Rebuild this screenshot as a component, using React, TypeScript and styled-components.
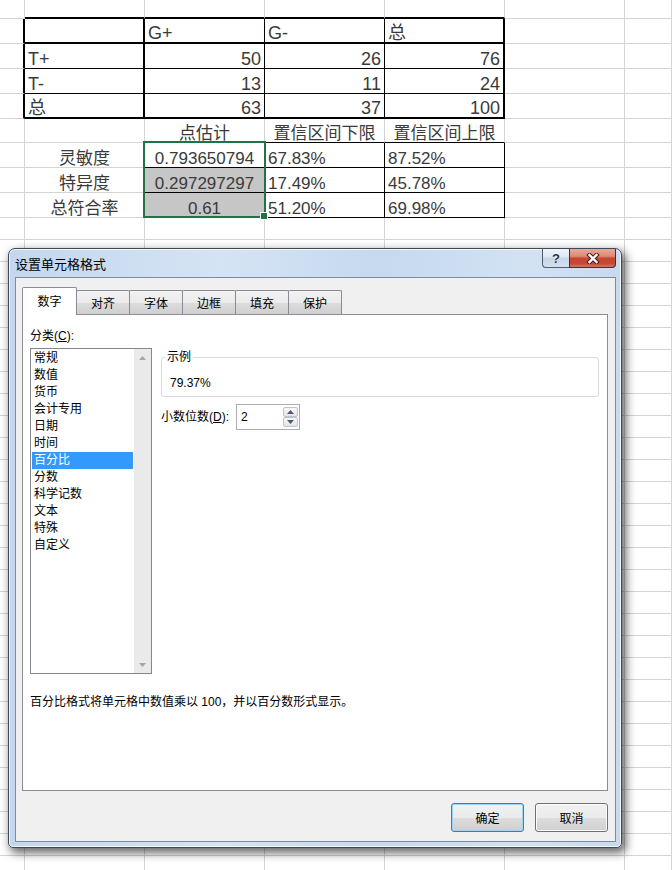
import styled, { createGlobalStyle } from "styled-components";

const GlobalStyle = createGlobalStyle`
  html, body {
    margin: 0;
    padding: 0;
    background: #fff;
  }
  body {
    font-family: "Liberation Sans", "Noto Sans CJK SC", sans-serif;
  }
`;

const Page = styled.div`
  position: relative;
  width: 672px;
  height: 870px;
  overflow: hidden;
  background: #fff;
`;

/* ---------- spreadsheet ---------- */

const Sheet = styled.div`
  display: grid;
  grid-template-columns: 25px repeat(5, 120px) 47px;
  grid-template-rows: 19px repeat(4, 25px) 24px repeat(3, 25px) repeat(30, 22px);
`;

type Line = "g" | "t" | "T";
type Align = "flex-start" | "flex-end" | "center";

const lineCss = (l: Line) =>
  l === "T" ? "2px solid #000" : l === "t" ? "1px solid #000" : "1px solid #d4d4d4";

const Cell = styled.div<{ $r: Line; $b: Line; $align: Align; $fill?: string; $size: number }>`
  position: relative;
  box-sizing: border-box;
  display: flex;
  align-items: flex-end;
  justify-content: ${(p) => p.$align};
  padding: 0 3px;
  border-right: ${(p) => lineCss(p.$r)};
  border-bottom: ${(p) => lineCss(p.$b)};
  background: ${(p) => p.$fill || "transparent"};
  font-size: ${(p) => p.$size}px;
  line-height: 1;
  color: #3a3a3a;
  white-space: nowrap;
`;

const Selection = styled.div`
  position: absolute;
  left: -2px;
  top: -2px;
  width: 123px;
  height: 77px;
  box-sizing: border-box;
  border: 2px solid #217346;
  z-index: 2;
  pointer-events: none;
`;

const FillHandle = styled.div`
  position: absolute;
  right: -4px;
  bottom: -4px;
  width: 6px;
  height: 6px;
  background: #217346;
  border: 1px solid #fff;
`;

const table1 = [
  ["", "G+", "G-", "总"],
  ["T+", "50", "26", "76"],
  ["T-", "13", "11", "24"],
  ["总", "63", "37", "100"],
];

const table2 = [
  ["", "点估计", "置信区间下限", "置信区间上限"],
  ["灵敏度", "0.793650794", "67.83%", "87.52%"],
  ["特异度", "0.297297297", "17.49%", "45.78%"],
  ["总符合率", "0.61", "51.20%", "69.98%"],
];

const ROWS = 39;
const COLS = 7;

const cellSpec = (r: number, c: number) => {
  let right: Line = "g";
  let bottom: Line = "g";
  if (r >= 1 && r <= 4) {
    right = (["T", "T", "t", "t", "T", "g", "g"] as Line[])[c];
  }
  if (r >= 6 && r <= 8 && c >= 1 && c <= 4) right = "t";
  if (c >= 1 && c <= 4) {
    if (r === 0 || r === 1 || r === 4) bottom = "T";
    if (r === 2 || r === 3) bottom = "t";
  }
  if (c >= 2 && c <= 4 && r >= 5 && r <= 8) bottom = "t";

  let text = "";
  let align: Align = "flex-start";
  let size = 18;
  if (r >= 1 && r <= 4 && c >= 1 && c <= 4) {
    text = table1[r - 1][c - 1];
    align = r === 1 || c === 1 ? "flex-start" : "flex-end";
  }
  if (r >= 5 && r <= 8 && c >= 1 && c <= 4) {
    text = table2[r - 5][c - 1];
    size = 17;
    align = r === 5 || c <= 2 ? "center" : "flex-start";
  }
  const fill = (r === 7 || r === 8) && c === 2 ? "#c6c6c6" : undefined;
  return { right, bottom, text, align, size, fill, selected: r === 6 && c === 2 };
};

const SheetGrid = () => {
  const cells = [];
  for (let r = 0; r < ROWS; r++) {
    for (let c = 0; c < COLS; c++) {
      const s = cellSpec(r, c);
      cells.push(
        <Cell key={`${r}-${c}`} $r={s.right} $b={s.bottom} $align={s.align} $fill={s.fill} $size={s.size}>
          {s.text}
          {s.selected && (
            <Selection>
              <FillHandle />
            </Selection>
          )}
        </Cell>
      );
    }
  }
  return <Sheet>{cells}</Sheet>;
};

/* ---------- dialog ---------- */

const Dialog = styled.div`
  position: absolute;
  left: 8px;
  top: 248px;
  width: 614px;
  height: 600px;
  box-sizing: border-box;
  display: flex;
  flex-direction: column;
  border: 1px solid #3f4a57;
  border-radius: 7px 7px 5px 5px;
  background: linear-gradient(90deg, #c3d7ee 0%, #d5e4f4 35%, #c6d9ef 60%, #d2e2f3 85%, #c7daef 100%);
  box-shadow: inset 0 0 0 1px rgba(255, 255, 255, 0.75), 3px 4px 10px 1px rgba(0, 0, 0, 0.6);
  font-family: "Liberation Sans", "Noto Sans CJK SC", sans-serif;
  font-size: 12px;
  color: #000;
  z-index: 5;
`;

const TitleBar = styled.div`
  height: 28px;
  display: flex;
  align-items: flex-start;
  padding-left: 6px;
`;

const Title = styled.div`
  margin-top: 8px;
  font-size: 13px;
  line-height: 16px;
`;

const CaptionButtons = styled.div`
  display: flex;
  margin-left: auto;
  margin-right: 5px;
`;

const HelpButton = styled.div`
  width: 27px;
  height: 19px;
  box-sizing: border-box;
  border: 1px solid #4e5d70;
  border-top: none;
  border-right: none;
  border-radius: 0 0 0 4px;
  background: linear-gradient(180deg, #eef3f9 0%, #dce6f2 45%, #c4d3e5 50%, #d3e0ee 100%);
  display: flex;
  align-items: center;
  justify-content: center;
  font-size: 13px;
  font-weight: bold;
  color: #2a3440;
  text-shadow: 0 0 2px #fff;
`;

const CloseButton = styled.div`
  width: 47px;
  height: 19px;
  box-sizing: border-box;
  border: 1px solid #5a2620;
  border-top: none;
  border-radius: 0 0 4px 0;
  background: linear-gradient(180deg, #e9a99b 0%, #dc8a78 40%, #c7452f 52%, #c24b35 80%, #d27563 100%);
  display: flex;
  align-items: center;
  justify-content: center;
`;

const Body = styled.div`
  flex: 1;
  margin: 0 5px 5px 6px;
  box-sizing: border-box;
  border: 1px solid #7b8ba0;
  background: #f0f0f0;
  display: flex;
  flex-direction: column;
  padding: 9px 7px 9px 6px;
`;

const TabStrip = styled.div`
  position: relative;
  z-index: 1;
  height: 28px;
  display: flex;
  align-items: flex-end;
  margin-bottom: -1px;
`;

const Tab = styled.div<{ $active?: boolean }>`
  box-sizing: border-box;
  display: flex;
  align-items: center;
  justify-content: center;
  border: 1px solid #898c95;
  border-bottom: none;
  border-radius: 2px 2px 0 0;
  width: ${(p) => (p.$active ? 55 : 54)}px;
  height: ${(p) => (p.$active ? 28 : 24)}px;
  margin-bottom: ${(p) => (p.$active ? 0 : 1)}px;
  margin-left: ${(p) => (p.$active ? 0 : -1)}px;
  padding-bottom: ${(p) => (p.$active ? 2 : 0)}px;
  background: ${(p) =>
    p.$active ? "#fff" : "linear-gradient(180deg, #f2f2f2 0%, #ebebeb 50%, #dddddd 51%, #cfcfcf 100%)"};
`;

const Panel = styled.div`
  flex: 1;
  box-sizing: border-box;
  border: 1px solid #898c95;
  background: #fff;
  padding: 13px 8px 0 7px;
`;

const PanelMain = styled.div`
  display: flex;
  gap: 9px;
`;

const CategoryColumn = styled.div`
  width: 122px;
`;

const FieldLabel = styled.div`
  line-height: 16px;
  margin-bottom: 4px;
  white-space: nowrap;
`;

const InlineLabel = styled.span`
  line-height: 16px;
  white-space: nowrap;
`;

const Accel = styled.span`
  text-decoration: underline;
`;

const ListBox = styled.div`
  height: 326px;
  box-sizing: border-box;
  border: 1px solid #828790;
  display: flex;
  background: #fff;
`;

const ItemList = styled.div`
  flex: 1;
  padding: 1px;
`;

const Item = styled.div<{ $selected?: boolean }>`
  height: 17px;
  line-height: 17px;
  padding-left: 2px;
  background: ${(p) => (p.$selected ? "#3399ff" : "transparent")};
  color: ${(p) => (p.$selected ? "#fff" : "#000")};
`;

const ScrollBar = styled.div`
  width: 17px;
  background: #eaeaea;
  display: flex;
  flex-direction: column;
  justify-content: space-between;
`;

const ScrollButton = styled.div`
  height: 17px;
  display: flex;
  align-items: center;
  justify-content: center;
`;

const DetailColumn = styled.div`
  flex: 1;
`;

const GroupBox = styled.fieldset`
  margin: 22px 0 0 0;
  padding: 11px 8px 5px;
  border: 1px solid #d5dbe0;
  border-radius: 3px;
  min-width: 0;
`;

const GroupLegend = styled.legend`
  padding: 0 2px;
  margin-left: -5px;
  line-height: 14px;
`;

const SampleText = styled.div`
  line-height: 16px;
`;

const SpinRow = styled.div`
  margin-top: 7px;
  display: flex;
  align-items: center;
  gap: 7px;
`;

const SpinBox = styled.div`
  width: 64px;
  height: 26px;
  box-sizing: border-box;
  border: 1px solid #abadb3;
  display: flex;
  background: #fff;
`;

const SpinValue = styled.div`
  flex: 1;
  padding-left: 4px;
  line-height: 24px;
`;

const SpinButtons = styled.div`
  width: 15px;
  margin: 2px 1px 2px 0;
  display: flex;
  flex-direction: column;
`;

const SpinButton = styled.div`
  flex: 1;
  box-sizing: border-box;
  border: 1px solid #bcc3cd;
  border-radius: 2px;
  background: linear-gradient(180deg, #f7f7f7, #e2e5e9);
  display: flex;
  align-items: center;
  justify-content: center;
`;

const Description = styled.div`
  margin-top: 20px;
  line-height: 16px;
  white-space: nowrap;
`;

const ButtonRow = styled.div`
  margin-top: 12px;
  display: flex;
  justify-content: flex-end;
  gap: 11px;
`;

const DialogButton = styled.div<{ $primary?: boolean }>`
  width: 73px;
  height: 29px;
  box-sizing: border-box;
  border: 1px solid ${(p) => (p.$primary ? "#3c7fb1" : "#707070")};
  border-radius: 3px;
  background: linear-gradient(180deg, #f2f2f2 0%, #ebebeb 50%, #dddddd 51%, #cfcfcf 100%);
  box-shadow: ${(p) => (p.$primary ? "inset 0 0 0 1px #9fd3f1" : "inset 0 0 0 1px #fbfbfb")};
  display: flex;
  align-items: center;
  justify-content: center;
`;

const Arrow = ({ up, color }: { up?: boolean; color: string }) => (
  <svg width="7" height="4" viewBox="0 0 7 4">
    <path d={up ? "M0 4 L3.5 0 L7 4 Z" : "M0 0 L3.5 4 L7 0 Z"} fill={color} />
  </svg>
);

const categories = ["常规", "数值", "货币", "会计专用", "日期", "时间", "百分比", "分数", "科学记数", "文本", "特殊", "自定义"];
const tabs = ["数字", "对齐", "字体", "边框", "填充", "保护"];

const FormatDialog = () => (
  <Dialog>
    <TitleBar>
      <Title>设置单元格格式</Title>
      <CaptionButtons>
        <HelpButton>?</HelpButton>
        <CloseButton>
          <svg width="14" height="11" viewBox="0 0 14 11">
            <path d="M3.5 2 L10.5 9 M10.5 2 L3.5 9" stroke="#4b1c16" strokeWidth="4.4" strokeLinecap="square" />
            <path d="M3.5 2 L10.5 9 M10.5 2 L3.5 9" stroke="#fff" strokeWidth="2.4" strokeLinecap="square" />
          </svg>
        </CloseButton>
      </CaptionButtons>
    </TitleBar>
    <Body>
      <TabStrip>
        {tabs.map((t, i) => (
          <Tab key={t} $active={i === 0}>
            {t}
          </Tab>
        ))}
      </TabStrip>
      <Panel>
        <PanelMain>
          <CategoryColumn>
            <FieldLabel>
              分类(<Accel>C</Accel>):
            </FieldLabel>
            <ListBox>
              <ItemList>
                {categories.map((c) => (
                  <Item key={c} $selected={c === "百分比"}>
                    {c}
                  </Item>
                ))}
              </ItemList>
              <ScrollBar>
                <ScrollButton>
                  <Arrow up color="#a6a6a6" />
                </ScrollButton>
                <ScrollButton>
                  <Arrow color="#a6a6a6" />
                </ScrollButton>
              </ScrollBar>
            </ListBox>
          </CategoryColumn>
          <DetailColumn>
            <GroupBox>
              <GroupLegend>示例</GroupLegend>
              <SampleText>79.37%</SampleText>
            </GroupBox>
            <SpinRow>
              <InlineLabel>
                小数位数(<Accel>D</Accel>):
              </InlineLabel>
              <SpinBox>
                <SpinValue>2</SpinValue>
                <SpinButtons>
                  <SpinButton>
                    <Arrow up color="#4e5b6e" />
                  </SpinButton>
                  <SpinButton>
                    <Arrow color="#4e5b6e" />
                  </SpinButton>
                </SpinButtons>
              </SpinBox>
            </SpinRow>
          </DetailColumn>
        </PanelMain>
        <Description>百分比格式将单元格中数值乘以 100，并以百分数形式显示。</Description>
      </Panel>
      <ButtonRow>
        <DialogButton $primary>确定</DialogButton>
        <DialogButton>取消</DialogButton>
      </ButtonRow>
    </Body>
  </Dialog>
);

const App = () => (
  <Page>
    <GlobalStyle />
    <SheetGrid />
    <FormatDialog />
  </Page>
);

export default App;
